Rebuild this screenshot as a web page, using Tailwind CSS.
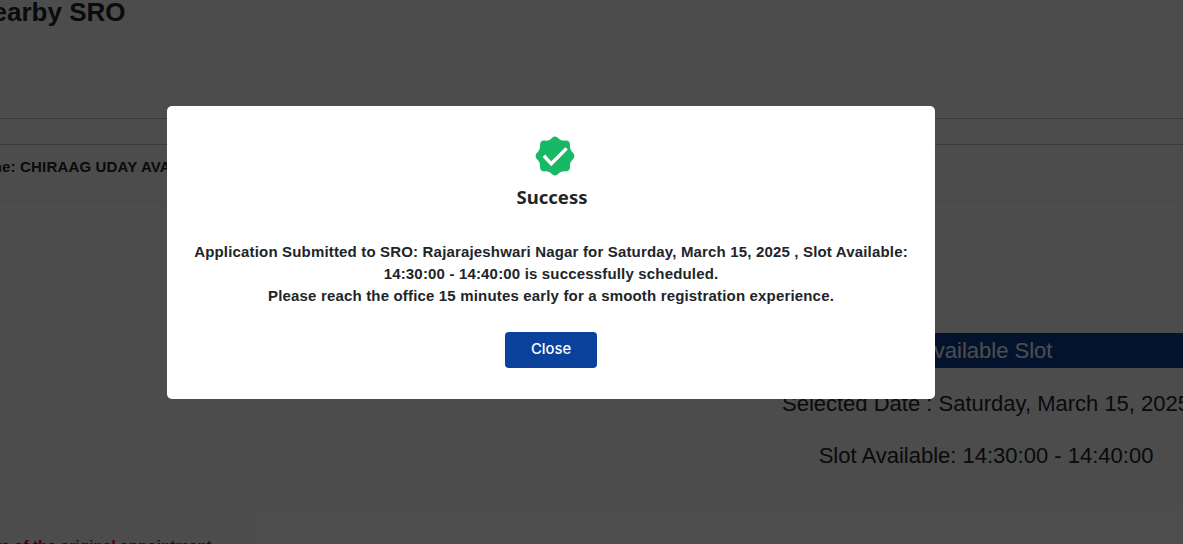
<!DOCTYPE html>
<html lang="en">
<head>
<meta charset="utf-8">
<title>Appointment</title>
<script src="https://cdn.jsdelivr.net/npm/@tailwindcss/browser@4"></script>
</head>
<body class="h-[544px] w-[1183px] overflow-hidden bg-white font-['Liberation_Sans',Arial,sans-serif] text-[#212529]">
<main class="flex h-[544px] flex-col overflow-hidden">
  <header class="h-[118px] shrink-0">
    <h1 class="flex h-6 w-[125.5px] justify-end text-[26px] leading-6 font-bold whitespace-nowrap">Nearby SRO</h1>
  </header>
  <div class="h-[27px] shrink-0 border-y border-[#c4c4c4]"></div>
  <section class="h-[56px] shrink-0 border-b border-[#f0f0f0] pt-[11px]">
    <p class="-ml-[31px] text-[15px] leading-[22px] font-bold tracking-[0.17px] whitespace-nowrap">Name: CHIRAAG UDAY AVADHANI</p>
  </section>
  <section class="ml-[751px] mt-[132px] w-[470px] shrink-0 text-center text-[22px]">
    <h2 class="h-[35px] bg-[#0a429b] leading-[35px] text-white">Available Slot</h2>
    <p class="mt-[19px] leading-[33px] whitespace-nowrap">Selected Date : Saturday, March 15, 2025</p>
    <p class="mt-[19px] leading-[33px] whitespace-nowrap">Slot Available: 14:30:00 - 14:40:00</p>
  </section>
  <p class="mt-[63px] flex w-[212px] shrink-0 justify-end text-[15px] leading-[22px] font-bold tracking-[0.17px] whitespace-nowrap text-[#ff0000]">days of the original appointment</p>
</main>
<div class="absolute inset-0 bg-black/70">
  <div role="dialog" class="mt-[106px] ml-[167px] flex h-[293px] w-[768px] flex-col items-center rounded-[5px] bg-white pt-[30px]">
    <svg class="ml-2 h-10 w-10" viewBox="0 0 40 40" fill="none">
      <path d="M17.5 1.5Q20-.5 22.5 1.5C25.5 4.5 27.2 5 31 4.5Q34.8 4.6 35 8.8C34.8 12.8 35.5 14.4 38.4 17.2Q40.4 20 38.4 22.8C35.5 25.6 34.8 27.2 35 31.2Q34.8 35 31 35.4C27.2 35 25.5 35.7 22.5 38.6Q20 40.6 17.5 38.6C14.5 35.7 12.8 35 9 35.4Q5.2 35 5 31.2C5.2 27.2 4.5 25.6 1.6 22.8Q-.4 20 1.6 17.2C4.5 14.4 5.2 12.8 5 8.8Q5.2 4.6 9 4.5C12.8 5 14.5 4.5 17.5 1.5Z" fill="#17b866"/>
      <path d="M10 21l6.3 6.8L30.4 13.6" stroke="#fff" stroke-width="3.4" stroke-linecap="square"/>
    </svg>
    <h3 class="mt-[8px] ml-[2px] h-[27px] font-['Noto_Sans',sans-serif] text-[18.5px] leading-[26px] font-bold">Success</h3>
    <p class="mt-[30px] text-center text-[15px] leading-[22px] font-bold tracking-[0.17px] whitespace-nowrap">Application Submitted to SRO: Rajarajeshwari Nagar for Saturday, March 15, 2025 , Slot Available:<br>14:30:00 - 14:40:00 is successfully scheduled.<br>Please reach the office 15 minutes early for a smooth registration experience.</p>
    <button class="mt-[25px] h-9 w-[92px] rounded-[4px] bg-[#0a429b] pb-[2px] font-['Inter',sans-serif] text-[14.8px] font-medium text-white">Close</button>
  </div>
</div>
</body>
</html>
